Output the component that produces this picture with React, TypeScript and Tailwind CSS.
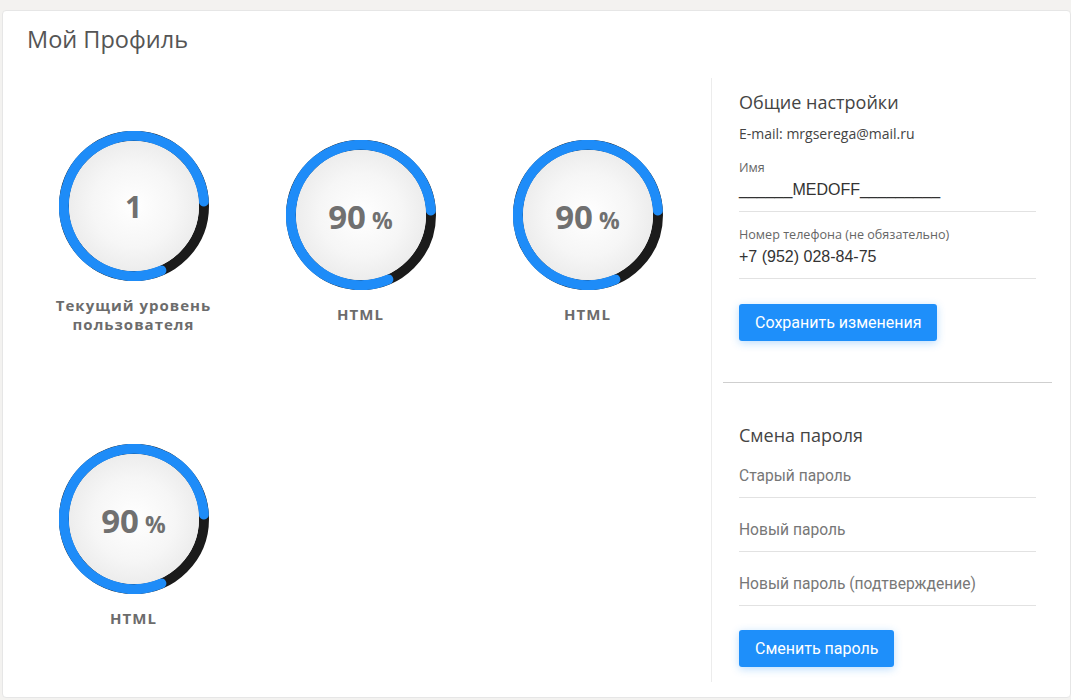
import React from 'react';

type Skill = { value: string; unit?: string; label: string[] };

const skills: Skill[] = [
  { value: '1', label: ['Текущий уровень', 'пользователя'] },
  { value: '90', unit: '%', label: ['HTML'] },
  { value: '90', unit: '%', label: ['HTML'] },
  { value: '90', unit: '%', label: ['HTML'] },
];

function Ring({ value, unit }: { value: string; unit?: string }) {
  const c = 2 * Math.PI * 70;
  return (
    <div className="relative h-[150px] w-[150px]">
      <svg className="absolute inset-0" width="150" height="150" viewBox="0 0 150 150">
        <circle cx="75" cy="75" r="70" fill="none" stroke="#1b1b1b" strokeWidth="10" />
        <circle
          cx="75"
          cy="75"
          r="70"
          fill="none"
          stroke="#1e8cf8"
          strokeWidth="10"
          strokeLinecap="round"
          strokeDasharray={`353 ${c}`}
          transform="rotate(67 75 75)"
        />
      </svg>
      <div className="absolute inset-[10px] flex items-center justify-center rounded-full bg-[radial-gradient(circle,#ffffff_0%,#f6f6f6_45%,#e2e2e2_100%)]">
        <span className="pt-[2px] font-['Open_Sans',sans-serif] font-bold leading-none text-[#707070]">
          <span className={value.length > 1 ? 'text-[33px]' : 'text-[30px]'}>{value}</span>
          {unit && <span className="ml-[6px] text-[23px]">{unit}</span>}
        </span>
      </div>
    </div>
  );
}

function Field({ label, value, placeholder }: { label?: string; value?: string; placeholder?: string }) {
  return (
    <div className="border-b border-[#e2e2e2]">
      {label && (
        <div className="font-['Open_Sans',sans-serif] text-[12.6px] leading-[16px] text-[#666]">{label}</div>
      )}
      {value ? (
        <div className="mt-[3px] pb-[10px] font-['Liberation_Sans',sans-serif] text-[16px] leading-[22px] text-[#333]">
          {value}
        </div>
      ) : (
        <div className="pb-[10px] font-['Roboto',sans-serif] text-[15.6px] leading-[22px] text-[#777]">{placeholder}</div>
      )}
    </div>
  );
}

function Button({ children }: { children: React.ReactNode }) {
  return (
    <button className="h-[37px] rounded-[3px] bg-[#1e8ffa] px-4 font-['Roboto',sans-serif] text-[16px] text-white shadow-[0_2px_8px_rgba(30,143,250,0.3)]">
      {children}
    </button>
  );
}

export default function App() {
  return (
    <div className="min-h-[700px] bg-[#f3f2f0] pl-[2px] pt-[10px]">
      <div className="h-[688px] w-[1069px] rounded-[4px] border border-[#e6e6e6] bg-white">
        <h1 className="pl-[24px] pt-[13px] font-['Open_Sans',sans-serif] text-[23.5px] leading-[30px] text-[#555]">
          Мой Профиль
        </h1>

        <div className="mt-[24px] flex">
          <div className="ml-[17px] grid w-[681px] grid-cols-3 grid-rows-[304px_304px] pt-[2px]">
            {skills.map((s, i) => (
              <div key={i} className="flex flex-col items-center justify-center">
                <Ring value={s.value} unit={s.unit} />
                <div className="mt-[15px] text-center font-['Open_Sans',sans-serif] text-[15px] font-bold leading-[19px] tracking-[1px] text-[#6c6c6c]">
                  {s.label.map((l) => (
                    <div key={l}>{l}</div>
                  ))}
                </div>
              </div>
            ))}
          </div>

          <div className="ml-[10px] h-[604px] flex-1 border-l border-[#ececec] pl-[11px] pr-[18px]">
            <div className="px-[16px] pt-[12px]">
              <h2 className="font-['Open_Sans',sans-serif] text-[18px] leading-[24px] text-[#444]">Общие настройки</h2>
              <div className="mt-[11px] font-['Open_Sans',sans-serif] text-[14px] leading-[18px] text-[#444]">
                E-mail: mrgserega@mail.ru
              </div>
              <div className="mt-[17px]">
                <Field label="Имя" value="______MEDOFF_________" />
              </div>
              <div className="mt-[15px]">
                <Field label="Номер телефона (не обязательно)" value="+7 (952) 028-84-75" />
              </div>
              <div className="mt-[25px]">
                <Button>Сохранить изменения</Button>
              </div>
            </div>

            <div className="mt-[41px] border-t border-[#cfcfcf]" />

            <div className="px-[16px] pt-[40px]">
              <h2 className="font-['Open_Sans',sans-serif] text-[18px] leading-[24px] text-[#444]">Смена пароля</h2>
              <div className="mt-[18px]">
                <Field placeholder="Старый пароль" />
              </div>
              <div className="mt-[21px]">
                <Field placeholder="Новый пароль" />
              </div>
              <div className="mt-[21px]">
                <Field placeholder="Новый пароль (подтверждение)" />
              </div>
              <div className="mt-[24px]">
                <Button>Сменить пароль</Button>
              </div>
            </div>
          </div>
        </div>
      </div>
    </div>
  );
}
